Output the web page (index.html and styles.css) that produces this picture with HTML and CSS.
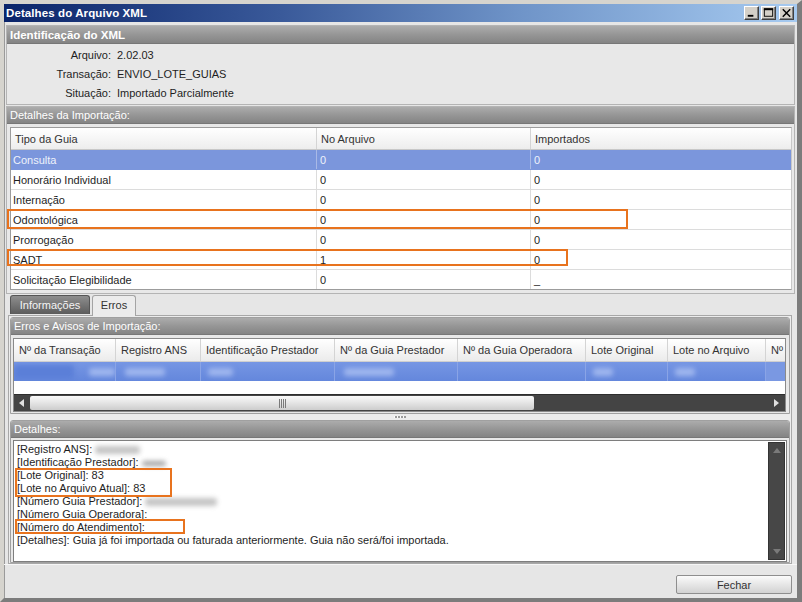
FILE: index.html
```html
<!DOCTYPE html>
<html lang="pt-BR">
<head>
<meta charset="utf-8">
<title>Detalhes do Arquivo XML</title>
<link rel="stylesheet" href="styles.css">
</head>
<body>
<div class="window">
  <div class="titlebar">
    <span class="title">Detalhes do Arquivo XML</span>
    <div class="tbtns">
      <span class="tbtn"><svg width="14" height="12" viewBox="0 0 14 12"><rect x="3" y="8" width="6" height="2" fill="#000"/></svg></span>
      <span class="tbtn"><svg width="14" height="12" viewBox="0 0 14 12"><rect x="2.5" y="1.5" width="9" height="8" fill="none" stroke="#000" stroke-width="1"/><rect x="2" y="1" width="10" height="2" fill="#000"/></svg></span>
      <span class="tbtn close"><svg width="14" height="12" viewBox="0 0 14 12"><path d="M3 2 L11 10 M11 2 L3 10" stroke="#000" stroke-width="1.6" fill="none"/></svg></span>
    </div>
  </div>

  <div class="client">
    <section class="panel id-panel">
      <div class="phead bold">Identificação do XML</div>
      <div class="id-body">
        <div class="kv"><span class="k">Arquivo:</span><span class="v">2.02.03</span></div>
        <div class="kv"><span class="k">Transação:</span><span class="v">ENVIO_LOTE_GUIAS</span></div>
        <div class="kv"><span class="k">Situação:</span><span class="v">Importado Parcialmente</span></div>
      </div>
    </section>

    <section class="panel imp-panel">
      <div class="phead">Detalhes da Importação:</div>
      <div class="grid-wrap">
        <div class="grid">
          <div class="grow ghead"><div class="gc">Tipo da Guia</div><div class="gc">No Arquivo</div><div class="gc">Importados</div></div>
          <div class="grow sel"><div class="gc">Consulta</div><div class="gc">0</div><div class="gc">0</div></div>
          <div class="grow"><div class="gc">Honorário Individual</div><div class="gc">0</div><div class="gc">0</div></div>
          <div class="grow"><div class="gc">Internação</div><div class="gc">0</div><div class="gc">0</div></div>
          <div class="grow"><div class="gc">Odontológica</div><div class="gc">0</div><div class="gc">0</div></div>
          <div class="grow"><div class="gc">Prorrogação</div><div class="gc">0</div><div class="gc">0</div></div>
          <div class="grow"><div class="gc">SADT</div><div class="gc">1</div><div class="gc">0</div></div>
          <div class="grow"><div class="gc">Solicitação Elegibilidade</div><div class="gc">0</div><div class="gc">_</div></div>
        </div>
        <div class="mark mark-odonto"></div>
        <div class="mark mark-sadt"></div>
      </div>
    </section>

    <div class="tabs">
      <span class="tab off">Informações</span>
      <span class="tab on">Erros</span>
    </div>

    <div class="tabpage">
      <section class="sub err">
        <div class="phead">Erros e Avisos de Importação:</div>
        <div class="etable">
          <div class="ehead">
            <div class="ec w1">Nº da Transação</div>
            <div class="ec w2">Registro ANS</div>
            <div class="ec w3">Identificação Prestador</div>
            <div class="ec w4">Nº da Guia Prestador</div>
            <div class="ec w5">Nº da Guia Operadora</div>
            <div class="ec w6">Lote Original</div>
            <div class="ec w7">Lote no Arquivo</div>
            <div class="ec w8">Nº</div>
          </div>
          <div class="erow">
            <div class="ec w1"><span class="blur b-dark"></span><span class="blur b-light bl1"></span></div>
            <div class="ec w2"><span class="blur b-light bl2"></span></div>
            <div class="ec w3"><span class="blur b-light bl3"></span></div>
            <div class="ec w4"><span class="blur b-light bl4"></span></div>
            <div class="ec w5"></div>
            <div class="ec w6"><span class="blur b-light bl5"></span></div>
            <div class="ec w7"><span class="blur b-light bl5"></span></div>
            <div class="ec w8"></div>
          </div>
          <div class="eblank"></div>
          <div class="hscroll">
            <span class="sarrow left"><svg width="6" height="8" viewBox="0 0 6 8"><path d="M5 0 L0 4 L5 8 Z" fill="#e0e0e0"/></svg></span>
            <span class="thumb"><span class="grip"></span></span>
            <span class="track"></span>
            <span class="sarrow right"><svg width="6" height="8" viewBox="0 0 6 8"><path d="M0 0 L5 4 L0 8 Z" fill="#e0e0e0"/></svg></span>
          </div>
        </div>
      </section>

      <div class="splitter"><span class="dots"></span></div>

      <section class="sub det">
        <div class="phead">Detalhes:</div>
        <div class="memo">
          <div class="memo-text">
            <div class="line">[Registro ANS]: <span class="blur b-gray bx1"></span></div>
            <div class="line">[Identificação Prestador]: <span class="blur b-gray bx2"></span></div>
            <div class="line">[Lote Original]: 83</div>
            <div class="line">[Lote no Arquivo Atual]: 83</div>
            <div class="line">[Número Guia Prestador]: <span class="blur b-gray bx3"></span></div>
            <div class="line">[Número Guia Operadora]:</div>
            <div class="line">[Número do Atendimento]:</div>
            <div class="line">[Detalhes]: Guia já foi importada ou faturada anteriormente. Guia não será/foi importada.</div>
          </div>
          <div class="vscroll">
            <svg class="va up" width="8" height="5" viewBox="0 0 8 5"><path d="M0 5 L4 0 L8 5 Z" fill="#7a7a7a"/></svg>
            <svg class="va down" width="8" height="5" viewBox="0 0 8 5"><path d="M0 0 L4 5 L8 0 Z" fill="#7a7a7a"/></svg>
          </div>
          <div class="mark mark-lote"></div>
          <div class="mark mark-atend"></div>
        </div>
      </section>
    </div>

    <div class="footer">
      <button class="btn">Fechar</button>
    </div>
  </div>
</div>
</body>
</html>
```

FILE: styles.css
```css
* { box-sizing: border-box; }
html, body { margin: 0; padding: 0; }
body {
  width: 802px; height: 602px; overflow: hidden;
  font-family: "Liberation Sans", Arial, sans-serif;
  font-size: 11px; color: #1e1e1e;
  background: #808080;
}
.window {
  width: 802px; height: 602px;
  display: flex; flex-direction: column;
  background: #e6e6e6;
  border-style: solid;
  border-width: 4px 5px 4px 4px;
  border-color: #d6d4ce #7c7c7c #7c7c7c #d6d4ce;
  box-shadow: inset 1px 1px 0 #9a9a9a;
}
.titlebar {
  height: 18px; flex: none;
  display: flex; align-items: center; justify-content: space-between;
  background: linear-gradient(to right, #0a246a 0%, #3a5a9a 35%, #6f94c8 65%, #a6caf0 100%);
  padding: 0 3px 0 2px;
}
.title { color: #fff; font-weight: bold; font-size: 11.5px; letter-spacing: 0.1px; }
.tbtns { display: flex; gap: 2px; }
.tbtn {
  width: 15px; height: 14px;
  display: flex; align-items: center; justify-content: center;
  background: #d4d0c8;
  border: 1px solid; border-color: #ffffff #404040 #404040 #ffffff;
  box-shadow: inset -1px -1px 0 #808080;
}
.close { margin-left: 1px; }

.client { flex: 1; display: flex; flex-direction: column; padding: 3px 0 0 0; }

.panel {
  margin: 0 2px 0 2px;
  border: 1px solid #b4b4b4;
  background: #e8e8e8;
}
.phead {
  height: 18px;
  display: flex; align-items: center;
  padding-left: 3px;
  color: #fff;
  background: linear-gradient(to bottom, #acacac 0%, #969696 50%, #848484 100%);
  border-bottom: 1px solid #777;
}
.phead.bold { font-weight: bold; font-size: 11.5px; }

.id-panel { height: 80px; }
.id-body { padding-top: 1px; }
.kv { height: 19px; display: flex; align-items: center; }
.k { width: 104px; text-align: right; }
.v { margin-left: 6px; }

.imp-panel { margin-top: 1px; height: 188px; }
.imp-panel .phead { height: 17px; }
.grid-wrap { position: relative; margin: 3px 2px 0 3px; }
.grid { border: 1px solid #9c9c9c; border-right-color: #c8c8c8; background: #fff; }
.grow { display: grid; grid-template-columns: 306px 214px 1fr; height: 20px; border-bottom: 1px solid #dcdcdc; }
.grow:last-child { border-bottom: none; height: 19px; }
.gc { display: flex; align-items: center; padding-left: 3px; border-right: 1px solid #dcdcdc; }
.gc:last-child { border-right: none; }
.grow .gc:first-child { padding-left: 2px; }
.ghead { height: 22px; background: linear-gradient(to bottom, #ffffff, #ededed); border-bottom: 1px solid #c8c8c8; color: #333; }
.ghead .gc { padding-left: 4px; border-right-color: #d4d4d4; }
.ghead .gc:first-child { padding-left: 4px; }
.sel { background: #7b96dc; color: #eef2fb; border-bottom-color: #7b96dc; }
.sel .gc { border-right-color: #a9b9e6; }

.mark { position: absolute; border: 2px solid #e8731e; pointer-events: none; }
.mark-odonto { left: -3px; top: 82px; width: 621px; height: 20px; }
.mark-sadt { left: -3px; top: 122px; width: 561px; height: 17px; }

.tabs { height: 21px; display: flex; align-items: flex-end; padding-left: 6px; gap: 2px; position: relative; z-index: 1; }
.tab { height: 19px; display: flex; align-items: center; justify-content: center; border-radius: 3px 3px 0 0; }
.tab.off {
  width: 80px; color: #f4f4f4;
  background: linear-gradient(to bottom, #8e8e8e, #5c5c5c);
  border: 1px solid #555; border-bottom: none;
  margin-bottom: 1px;
}
.tab.on {
  width: 44px; height: 21px; color: #333;
  background: #ececec;
  border: 1px solid #a4a4a4; border-bottom: none;
  margin-bottom: -1px;
  padding-bottom: 2px;
}

.tabpage {
  margin: 0 5px 0 4px;
  height: 249px;
  border: 1px solid #a8a8a8;
  background: #ececec;
  padding: 1px 1px 0 1px;
}
.sub { border: 1px solid #a0a0a0; border-radius: 3px 3px 0 0; background: #e8e8e8; }
.sub .phead { height: 17px; border-radius: 2px 2px 0 0; }
.err { height: 97px; }
.etable { margin: 3px 3px 0 2px; border: 1px solid #8a8a8a; background: #fff; overflow: hidden; }
.ehead, .erow { display: flex; }
.ehead { height: 23px; background: linear-gradient(to bottom, #ffffff, #ebebeb); border-bottom: 1px solid #cfcfcf; color: #333; }
.ec { flex: none; display: flex; align-items: center; padding-left: 5px; border-right: 1px solid #d4d4d4; white-space: nowrap; overflow: hidden; position: relative; }
.w1 { width: 102px; } .w2 { width: 85px; } .w3 { width: 134px; } .w4 { width: 123px; }
.w5 { width: 128px; } .w6 { width: 82px; } .w7 { width: 98px; } .w8 { width: 30px; border-right: none; }
.erow { height: 19px; background: linear-gradient(to bottom, #7696e4, #6487dc); }
.erow .ec { border-right: 1px solid #8aa4e6; }
.erow .w8 { background: #7a98e2; }
.blur { display: inline-block; filter: blur(2.5px); border-radius: 3px; }
.b-light { background: #9fb6ee; height: 8px; }
.b-dark { position: absolute; left: 0; top: 3px; width: 60px; height: 14px; background: #5b7fd8; }
.bl1 { width: 30px; margin-left: 70px; }
.bl2 { width: 40px; margin-left: 4px; }
.bl3 { width: 25px; margin-left: 2px; }
.bl4 { width: 50px; margin-left: 4px; }
.bl5 { width: 20px; margin-left: 2px; }
.eblank { height: 13px; background: #fff; }
.hscroll { height: 17px; display: flex; background: #444; border-top: 1px solid #2e2e2e; }
.sarrow { width: 16px; flex: none; display: flex; align-items: center; justify-content: center; }
.thumb {
  width: 504px; flex: none;
  margin: 1px 0;
  background: linear-gradient(to bottom, #fafafa, #e4e4e4 50%, #cdcdcd);
  border-radius: 2px;
  display: flex; align-items: center; justify-content: center;
}
.grip { width: 7px; height: 9px; background: repeating-linear-gradient(to right, #7a7a7a 0 1px, transparent 1px 2px); }
.track { flex: 1; }

.splitter { height: 6px; display: flex; align-items: center; justify-content: center; }
.dots { width: 12px; height: 2px; background: repeating-linear-gradient(to right, #fafafa 0 1px, #9a9a9a 1px 3px); }

.det { height: 143px; }
.memo { position: relative; margin: 2px 2px 0 2px; height: 122px; border: 1px solid #7e7e7e; background: #fff; display: flex; }
.memo-text { flex: 1; padding: 2px 0 0 3px; }
.line { height: 13px; line-height: 13px; white-space: nowrap; }
.b-gray { background: #c4c4c4; height: 8px; vertical-align: middle; }
.bx1 { width: 45px; }
.bx2 { width: 24px; height: 5px; background: #a0a0a0; }
.bx3 { width: 72px; }
.vscroll { width: 17px; flex: none; margin: 1px 1px 1px 0; background: #474747; border: 1px solid #333; position: relative; }
.va { position: absolute; left: 4px; }
.va.up { top: 5px; }
.va.down { bottom: 5px; }
.mark-lote { left: 1px; top: 27px; width: 157px; height: 29px; }
.mark-atend { left: 1px; top: 78px; width: 170px; height: 15px; }

.footer { flex: 1; display: flex; justify-content: flex-end; align-items: flex-start; padding: 10px 5px 0 0; border-top: 1px solid #f6f6f6; }
.btn {
  width: 116px; height: 19px;
  font: inherit; color: #333;
  background: linear-gradient(to bottom, #fbfbfb, #e6e6e6 50%, #d2d2d2);
  border: 1px solid #8e8e8e; border-radius: 2px;
  padding: 0;
}
```
